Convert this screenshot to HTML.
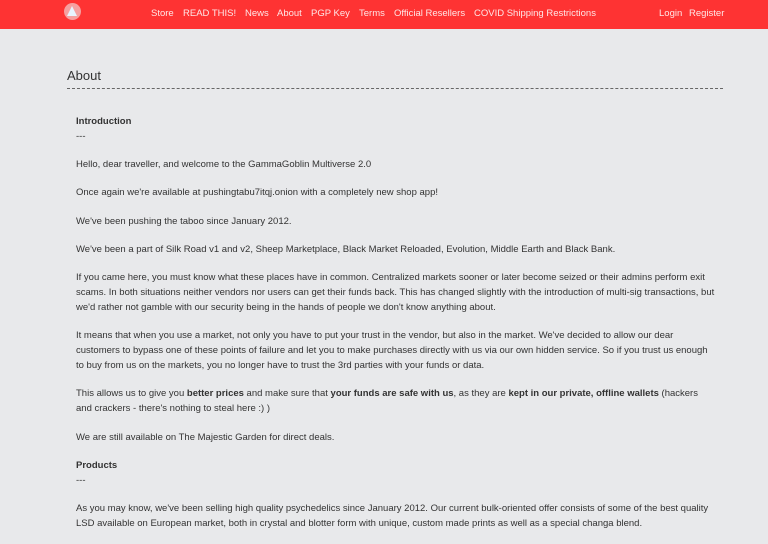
<!DOCTYPE html>
<html><head><style>
html,body{margin:0;background:#e8e9eb;font-family:"Liberation Sans",Arial,sans-serif;width:768px;height:522px;overflow:hidden;}
.nav{height:29px;background:#fe3333;position:relative;color:#ffe6e6;font-size:9.5px;}
.nav span{position:absolute;top:8px;}
.logo{position:absolute;left:64px;top:3px;width:17px;height:17px;border-radius:50%;background:#f6a0a0;}
.logo:after{content:"";position:absolute;left:3px;top:3px;border-left:5.5px solid transparent;border-right:5.5px solid transparent;border-bottom:10px solid #e8f4ff;}
h1{position:absolute;left:67px;top:68px;margin:0;font-weight:normal;font-size:13px;color:#333;}
.rule{position:absolute;left:67px;top:88px;width:656px;border-top:1px dashed #666;}
.c{position:absolute;left:76px;top:114px;width:640px;font-size:9.5px;line-height:15px;color:#333;}
.c p{margin:0 0 13.2px;}
</style></head><body>
<div class="nav"><div class="logo"></div>
<span style="left:151px">Store</span><span style="left:183px">READ THIS!</span><span style="left:245px">News</span><span style="left:277px">About</span><span style="left:311px">PGP Key</span><span style="left:359px">Terms</span><span style="left:394px">Official Resellers</span><span style="left:474px">COVID Shipping Restrictions</span><span style="left:659px">Login</span><span style="left:689px">Register</span></div>
<h1>About</h1><div class="rule"></div>
<div class="c">
<p><b>Introduction</b><br>---</p>
<p>Hello, dear traveller, and welcome to the GammaGoblin Multiverse 2.0</p>
<p>Once again we're available at pushingtabu7itqj.onion with a completely new shop app!</p>
<p>We've been pushing the taboo since January 2012.</p>
<p>We've been a part of Silk Road v1 and v2, Sheep Marketplace, Black Market Reloaded, Evolution, Middle Earth and Black Bank.</p>
<p>If you came here, you must know what these places have in common. Centralized markets sooner or later become seized or their admins perform exit scams. In both situations neither vendors nor users can get their funds back. This has changed slightly with the introduction of multi-sig transactions, but we'd rather not gamble with our security being in the hands of people we don't know anything about.</p>
<p>It means that when you use a market, not only you have to put your trust in the vendor, but also in the market. We've decided to allow our dear customers to bypass one of these points of failure and let you to make purchases directly with us via our own hidden service. So if you trust us enough to buy from us on the markets, you no longer have to trust the 3rd parties with your funds or data.</p>
<p>This allows us to give you <b>better prices</b> and make sure that <b>your funds are safe with us</b>, as they are <b>kept in our private, offline wallets</b> (hackers and crackers - there's nothing to steal here :) )</p>
<p>We are still available on The Majestic Garden for direct deals.</p>
<p><b>Products</b><br>---</p>
<p>As you may know, we've been selling high quality psychedelics since January 2012. Our current bulk-oriented offer consists of some of the best quality LSD available on European market, both in crystal and blotter form with unique, custom made prints as well as a special changa blend.</p>
</div>
</body></html>
